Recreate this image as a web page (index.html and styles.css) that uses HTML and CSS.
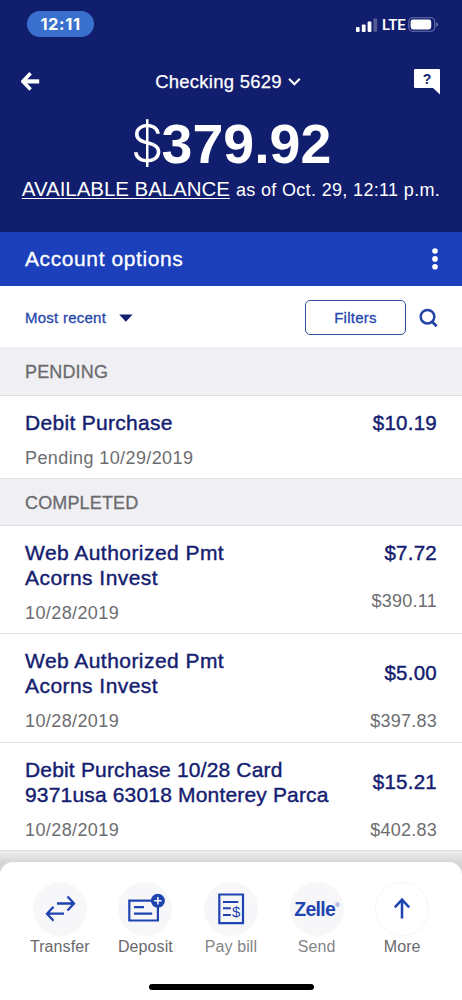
FILE: index.html
```html
<!DOCTYPE html>
<html lang="en">
<head>
<meta charset="utf-8">
<title>Checking 5629</title>
<link rel="stylesheet" href="styles.css">
</head>
<body>
<div class="app">
  <header class="header">
    <div class="status">
      <span class="clock">12:11</span>
      <div class="signals">
        <svg class="bars" width="22" height="14" viewBox="0 0 22 14"><g fill="#fff"><rect x="0" y="9" width="3.6" height="5" rx="1"/><rect x="5.8" y="6.6" width="3.8" height="7.4" rx="1"/><rect x="11.6" y="3.6" width="3.8" height="10.4" rx="1"/><rect x="17.4" y="0.4" width="3.8" height="13.4" rx="1" opacity=".28"/></g></svg>
        <span class="lte">LTE</span>
        <svg class="battery" width="31" height="15" viewBox="0 0 31 15"><rect x=".8" y=".8" width="26" height="13.4" rx="4" fill="none" stroke="#6a74ab" stroke-width="1.1"/><rect x="2.6" y="2.6" width="20.6" height="9.8" rx="2.4" fill="#fff"/><path d="M28.4 5.2q1.6.8 1.6 2.3t-1.6 2.3z" fill="#8088b6"/></svg>
      </div>
    </div>
    <div class="titlebar">
      <svg class="back" width="19" height="19" viewBox="0 0 19 19" fill="none" stroke="#fff"><path d="M9.6 1.2 1.9 9.4l7.7 8.1" stroke-width="3.5"/><path d="M2.5 9.4H18.2" stroke-width="4.2"/></svg>
      <div class="account"><span class="account-name">Checking 5629</span><svg width="13" height="10" viewBox="0 0 13 10" fill="none" stroke="#fff" stroke-width="2.1"><path d="M1 1.7l5.4 5.6 5.4-5.6"/></svg></div>
      <svg class="help" width="27" height="26" viewBox="0 0 27 26"><path d="M1.2 0H25q1 0 1 1v24.4L19 19H1.2Q0 19 0 17.8V1.2Q0 0 1.2 0z" fill="#fff"/><text class="help-mark" x="13" y="14.6" text-anchor="middle">?</text></svg>
    </div>
    <div class="balance"><span class="dollar">$</span><span class="sum">379.92</span></div>
    <div class="asof"><span class="available">AVAILABLE BALANCE</span><span class="date-time">as of Oct. 29, 12:11 p.m.</span></div>
  </header>
  <div class="options"><span>Account options</span><svg width="8" height="22" viewBox="0 0 8 22" fill="#fff"><circle cx="4" cy="3" r="2.8"/><circle cx="4" cy="10.9" r="2.8"/><circle cx="4" cy="18.8" r="2.8"/></svg></div>
  <div class="toolbar">
    <div class="sort"><span>Most recent</span><svg width="14" height="8" viewBox="0 0 14 8"><path d="M.2.4h13.4L6.9 7.8z" fill="#10206f"/></svg></div>
    <div class="tools"><span class="filters">Filters</span><svg width="19" height="20" viewBox="0 0 19 20" fill="none" stroke="#2244a4"><circle cx="8.5" cy="8.7" r="6.8" stroke-width="2.5"/><path d="M13 13.5l4.6 4.8" stroke-width="2.8"/></svg></div>
  </div>
  <h2 class="section">PENDING</h2>
  <div class="row pending">
    <div><div class="name short">Debit Purchase</div><div class="meta">Pending 10/29/2019</div></div>
    <div class="figures"><div class="amount">$10.19</div></div>
  </div>
  <h2 class="section completed">COMPLETED</h2>
  <div class="row">
    <div><div class="name">Web Authorized Pmt<br>Acorns Invest</div><div class="meta">10/28/2019</div></div>
    <div class="figures first"><div class="amount">$7.72</div><div class="meta">$390.11</div></div>
  </div>
  <div class="row">
    <div><div class="name">Web Authorized Pmt<br>Acorns Invest</div><div class="meta">10/28/2019</div></div>
    <div class="figures"><div class="amount">$5.00</div><div class="meta">$397.83</div></div>
  </div>
  <div class="row">
    <div><div class="name long">Debit Purchase 10/28 Card<br>9371usa 63018 Monterey Parca</div><div class="meta">10/28/2019</div></div>
    <div class="figures"><div class="amount">$15.21</div><div class="meta">$402.83</div></div>
  </div>
  <div class="dock">
    <nav class="nav">
      <div class="item"><span class="disc"><svg width="54" height="54" viewBox="0 0 54 54" fill="none" stroke="#1f44b0" stroke-width="2.3"><path d="M24 21.5H40M34.5 14.5l6.5 7-6.5 7M31 31.7H15M20.5 24.7l-6.5 7 6.5 7"/></svg></span><span>Transfer</span></div>
      <div class="item"><span class="disc"><svg width="54" height="54" viewBox="0 0 54 54" fill="none" stroke="#1f44b0"><path d="M11.3 18.7H39.9V38.5H11.3z" stroke-width="2.2"/><path d="M16 25.2h10M16 31.7h18.2" stroke-width="2.2"/><circle cx="39.9" cy="18.7" r="7" fill="#1f44b0" stroke="none"/><path d="M39.9 15v7.4M36.2 18.7h7.4" stroke="#fff" stroke-width="1.5"/></svg></span><span>Deposit</span></div>
      <div class="item"><span class="disc"><svg width="54" height="54" viewBox="0 0 54 54" fill="none" stroke="#1f44b0"><path d="M15.3 12.5H39V41.2H15.3z" stroke-width="2.2"/><path d="M19 20h15.3M19 26.3h7.8M19 33h7.8" stroke-width="2.1"/><text class="bill-mark" x="32.2" y="34.7" text-anchor="middle">$</text></svg></span><span class="pale">Pay bill</span></div>
      <div class="item"><span class="disc"><span class="zelle">Zelle<sup>®</sup></span></span><span class="pale">Send</span></div>
      <div class="item"><span class="disc ring"><svg width="54" height="54" viewBox="0 0 54 54" fill="none" stroke="#1f44b0" stroke-width="2.5"><path d="M27 36.5V18M19.8 25.4l7.2-7.8 7.2 7.8"/></svg></span><span>More</span></div>
    </nav>
    <div class="home"></div>
  </div>
</div>
</body>
</html>
```
FILE: styles.css
```css
* { box-sizing: border-box; }
body { margin: 0; font-family: "Liberation Sans", Arial, sans-serif; background: #fff; }
svg { display: block; flex: none; }
.app { width: 462px; height: 1000px; overflow: hidden; display: flex; flex-direction: column; background: #fff; }
.header { height: 232px; flex: none; background: #111d6d; color: #fff; }
.status { height: 48px; padding: 11px 23px 0 27px; display: flex; justify-content: space-between; align-items: flex-start; }
.clock { width: 67px; height: 26px; border-radius: 13px; background: #3970cd; text-align: center; font: bold 16.5px/26px Inter, "Liberation Sans", sans-serif; letter-spacing: .6px; }
.signals { display: flex; align-items: center; height: 27px; }
.lte { margin: 0 3px 0 4px; font: 600 15px/20px Roboto, "Liberation Sans", sans-serif; letter-spacing: -.2px; width: 23px; text-align: center; }
.titlebar { height: 66px; padding: 1px 21px 0 21px; display: flex; align-items: center; justify-content: space-between; }
.account { display: flex; align-items: center; gap: 6px; margin-left: 2px; }
.account-name { font-size: 18.5px; letter-spacing: .25px; -webkit-text-stroke: .25px #fff; }
.help-mark { font: bold 14px "Liberation Sans", sans-serif; fill: #111d6d; }
.balance { height: 62px; display: flex; justify-content: center; line-height: 60px; }
.dollar { font: 300 52px/59px Inter, "Liberation Sans", sans-serif; margin-right: -2px; }
.sum { font-size: 55.5px; font-weight: bold; }
.asof { display: flex; justify-content: center; align-items: baseline; gap: 6px; line-height: 25px; }
.available { font-size: 20.5px; letter-spacing: -.05px; text-decoration: underline; text-decoration-thickness: 1px; text-underline-offset: 2px; }
.date-time { font-size: 18px; letter-spacing: .34px; }
.options { height: 54px; flex: none; background: #1c3fbb; color: #fff; display: flex; align-items: center; justify-content: space-between; padding: 0 23px 0 25px; font-size: 21px; letter-spacing: .6px; -webkit-text-stroke: .3px; }
.toolbar { height: 61px; flex: none; display: flex; align-items: center; justify-content: space-between; padding: 2px 24px 0 25px; color: #2547ad; font-size: 15px; letter-spacing: .25px; -webkit-text-stroke: .3px; }
.sort, .tools { display: flex; align-items: center; gap: 13px; }
.filters { width: 101px; height: 35px; border: 1px solid #31539f; border-radius: 5px; text-align: center; line-height: 34px; }
.section { flex: none; margin: 0; height: 49px; padding-left: 25px; background: #f0f0f4; border-bottom: 1px solid #dfdfe2; color: #6b6b6e; font-size: 18px; line-height: 51px; font-weight: normal; letter-spacing: .15px; -webkit-text-stroke: .3px; }
.completed { height: 47px; line-height: 48px; }
.row { flex: none; height: 108.4px; padding: 14px 25px 0; display: flex; justify-content: space-between; border-bottom: 1px solid #dfdfe2; }
.pending { height: 83px; }
.name, .amount { color: #14206f; font-size: 21px; line-height: 25px; letter-spacing: .45px; -webkit-text-stroke: .4px; }
.name.short { letter-spacing: .3px; }
.name.long { letter-spacing: .17px; }
.amount { font-size: 20.5px; letter-spacing: .25px; }
.meta { color: #6d6d70; font-size: 18px; line-height: 24px; margin-top: 11px; letter-spacing: .4px; }
.figures { text-align: right; padding-top: 12px; }
.figures .meta { margin-top: 24px; letter-spacing: .25px; }
.first, .pending .figures { padding-top: 0; }
.dock { flex: 1; background: linear-gradient(#eee, #d5d5d5 12px); padding-top: 10.8px; }
.nav { height: 138px; border-radius: 13px 13px 0 0; background: #fff; display: flex; padding: 20px 17px 0; justify-content: space-between; }
.item { width: 86px; display: flex; flex-direction: column; align-items: center; color: #6a6a6d; font-size: 16px; letter-spacing: .1px; line-height: 20px; }
.disc { width: 54px; height: 54px; border-radius: 50%; background: #f7f7f9; display: flex; align-items: center; justify-content: center; margin-bottom: 1px; }
.ring { background: #fff; border: 1px solid #f5f5f7; }
.pale { color: #858588; }
.zelle { color: #1f44b0; font-size: 19.5px; font-weight: bold; letter-spacing: -.7px; white-space: nowrap; }
.zelle sup { font-size: 6px; line-height: 0; vertical-align: 9px; font-weight: normal; }
.bill-mark { font: 15px "Liberation Sans", sans-serif; fill: #1f44b0; stroke: none; }
.home { width: 165px; height: 6px; border-radius: 3px; background: #000; margin: -16px auto 0; position: relative; }
```
